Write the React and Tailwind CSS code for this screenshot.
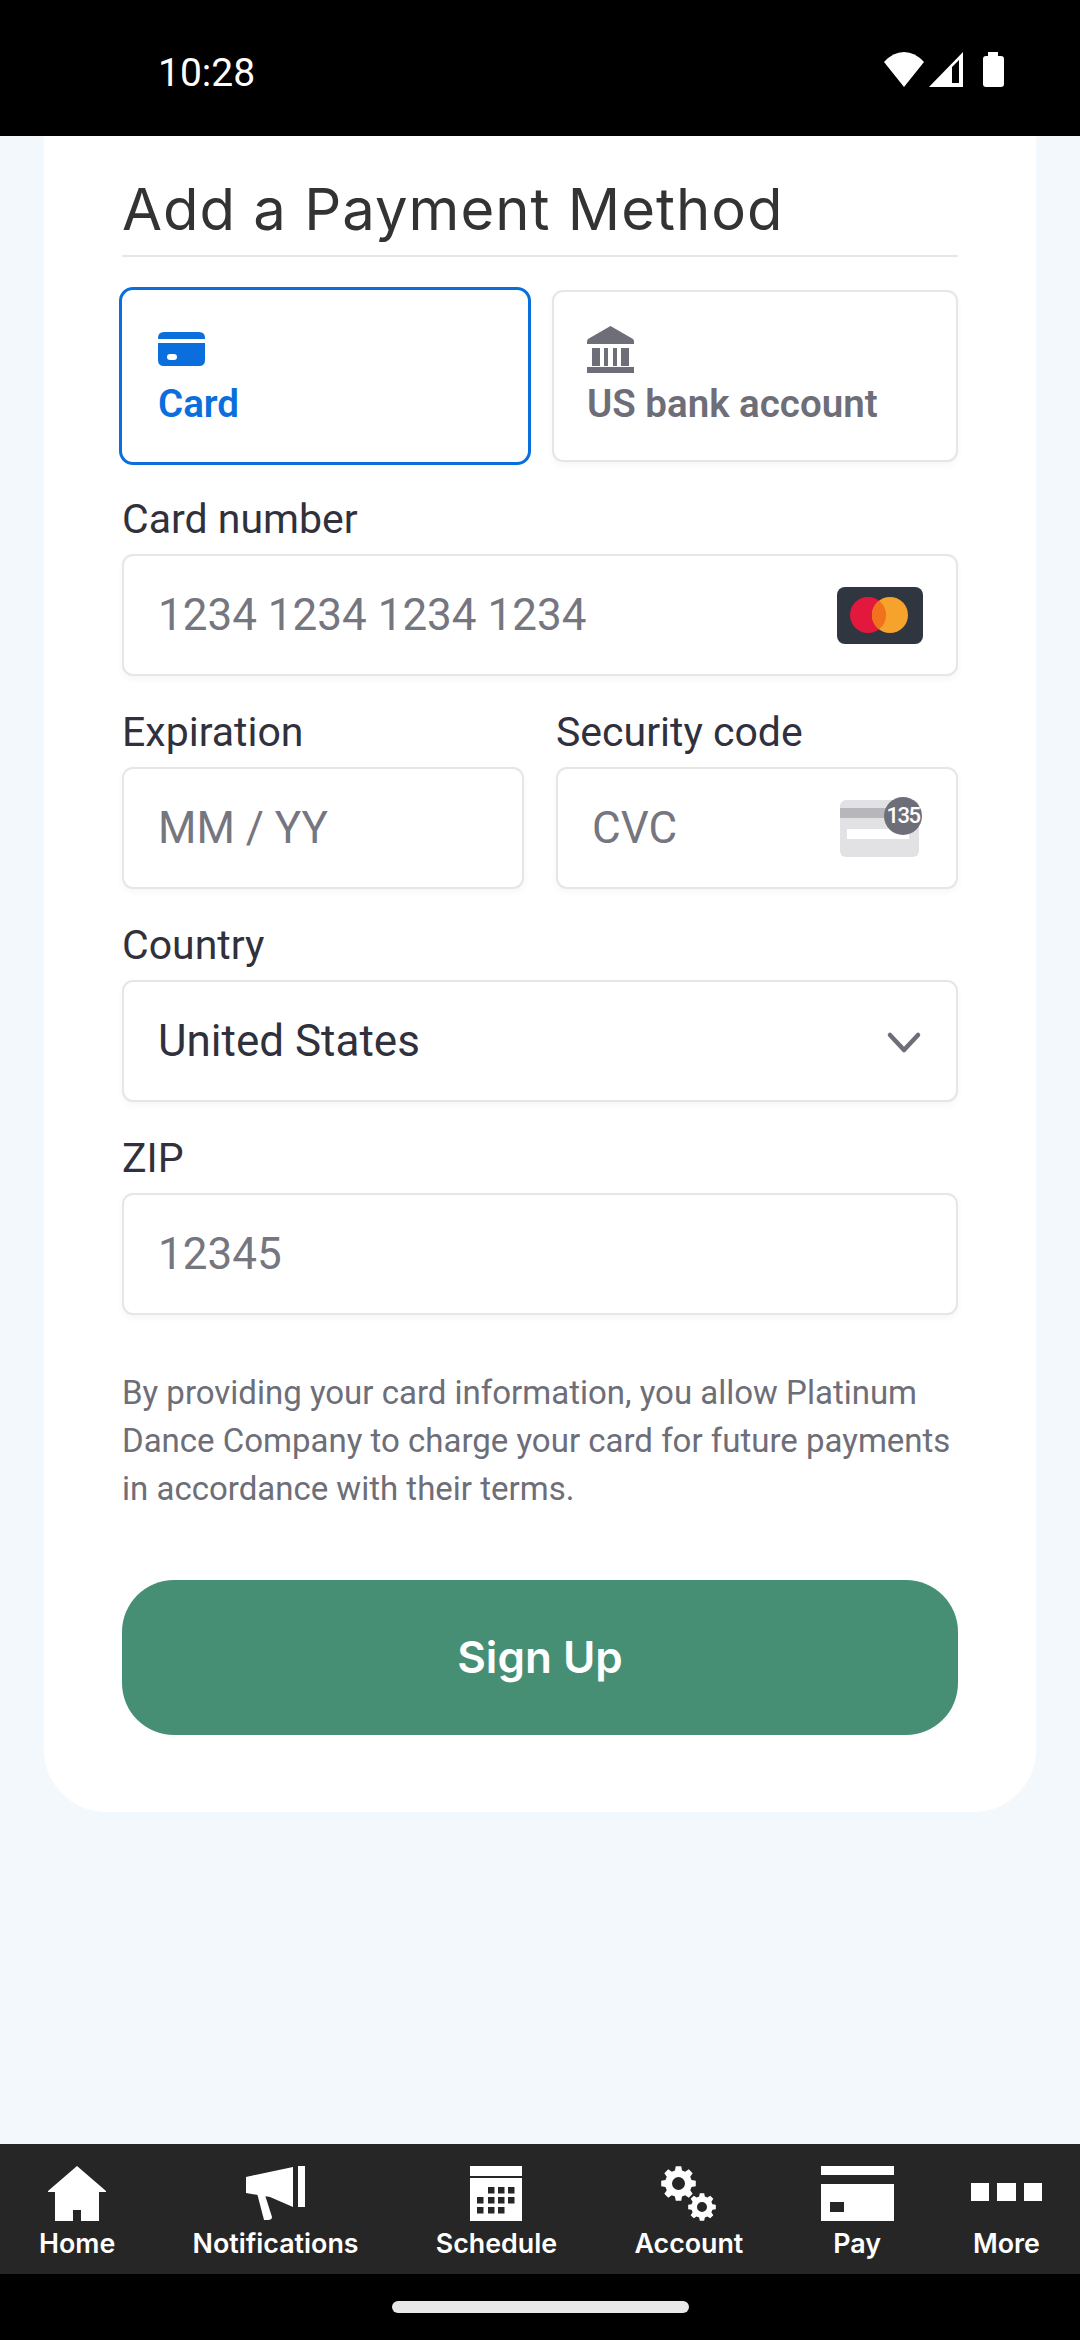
import React from "react";

const gearPath = (cx, cy, outer, inner, teeth = 8) => {
  const step = (Math.PI * 2) / teeth;
  const pts = [];
  for (let i = 0; i < teeth; i++) {
    const a = i * step - Math.PI / 2;
    [
      [inner, a - step * 0.34],
      [outer, a - step * 0.2],
      [outer, a + step * 0.2],
      [inner, a + step * 0.34],
    ].forEach(([r, t]) => pts.push(`${(cx + r * Math.cos(t)).toFixed(2)} ${(cy + r * Math.sin(t)).toFixed(2)}`));
  }
  return `M${pts.join("L")}Z`;
};

const circlePath = (cx, cy, r) => `M${cx - r} ${cy}a${r} ${r} 0 1 0 ${r * 2} 0a${r} ${r} 0 1 0 ${-r * 2} 0Z`;

function HomeIcon() {
  return (
    <svg width="58" height="55" viewBox="0 0 58 55" fill="#fff">
      <path fillRule="evenodd" d="M29 0L58 25L58 26L51 26L51 55L7 55L7 26L0 26L0 25ZM25 44L25 55L33 55L33 44Z" />
    </svg>
  );
}

function BellIcon() {
  return (
    <svg width="59" height="55" viewBox="0 0 59 55" fill="#fff">
      <path d="M0 11L47 1L47 41L24 31L0 27Z" />
      <path d="M11 27L19 29L26 51Q26 54 22 54L18 54Z" />
      <rect x="52" width="7" height="41" />
    </svg>
  );
}

function ScheduleIcon() {
  const rows = [
    [18, 28, 38],
    [7, 18, 28, 38],
    [7, 18, 28],
  ];
  return (
    <svg width="52" height="55" viewBox="0 0 52 55" fill="#fff">
      <rect width="52" height="10" />
      <rect y="12" width="52" height="43" />
      {rows.map((row, i) =>
        row.map((x) => <rect key={`${i}-${x}`} x={x} y={21 + i * 10} width="6.5" height="6.5" fill="#262626" />)
      )}
    </svg>
  );
}

function GearsIcon() {
  return (
    <svg width="55" height="55" viewBox="0 0 55 55" fill="#fff">
      <path fillRule="evenodd" d={gearPath(17.5, 17.5, 17.5, 13.5) + circlePath(17.5, 17.5, 6.5)} />
      <path fillRule="evenodd" d={gearPath(41, 41, 14, 10.8) + circlePath(41, 41, 5)} />
    </svg>
  );
}

function PayIcon() {
  return (
    <svg width="73" height="55" viewBox="0 0 73 55" fill="#fff">
      <rect width="73" height="9" />
      <path fillRule="evenodd" d="M0 18H73V55H0ZM9 36V46H23V36Z" />
    </svg>
  );
}

function MoreIcon() {
  return (
    <svg width="71" height="55" viewBox="0 0 71 55" fill="#fff">
      <rect y="17" width="18" height="18" />
      <rect x="26" y="17" width="19" height="18" />
      <rect x="53" y="17" width="18" height="18" />
    </svg>
  );
}

const NAV_ITEMS = [
  { label: "Home", Icon: HomeIcon },
  { label: "Notifications", Icon: BellIcon },
  { label: "Schedule", Icon: ScheduleIcon },
  { label: "Account", Icon: GearsIcon },
  { label: "Pay", Icon: PayIcon },
  { label: "More", Icon: MoreIcon },
];

function StatusBar() {
  return (
    <div className="flex h-[136px] shrink-0 items-center justify-between bg-black pl-[158px] pr-[76px] pt-[11px] text-white">
      <span className="font-['Roboto',sans-serif] text-[39px] leading-none">10:28</span>
      <div className="-mt-[9px] flex items-center gap-[5px]">
        <svg width="40" height="35" viewBox="0 0 40 35" fill="#fff">
          <path d="M20 35L0 10Q9 0 20 0T40 10Z" />
        </svg>
        <svg width="34" height="35" viewBox="0 0 34 35" fill="#fff">
          <path fillRule="evenodd" d="M0 35L34 0V35ZM23 15V31H30V8Z" />
        </svg>
        <svg className="ml-[15px]" width="21" height="35" viewBox="0 0 21 35" fill="#fff">
          <path d="M5 0H15V4H18Q21 4 21 7V32Q21 35 18 35H3Q0 35 0 32V7Q0 4 3 4H5Z" />
        </svg>
      </div>
    </div>
  );
}

function Label({ children }) {
  return <div className="mb-[25px] h-[20px] text-[41px] leading-[20px] text-[#30313d]">{children}</div>;
}

function Input({ children, className = "" }) {
  return (
    <div
      className={`flex h-[122px] items-center justify-between rounded-[11px] border-2 border-[#e6e6e6] bg-white pl-[34px] pr-[34px] text-[44px] text-[#757680] shadow-[0_3px_7px_rgba(0,0,0,0.04)] ${className}`}
    >
      {children}
    </div>
  );
}

function MastercardIcon() {
  return (
    <svg className="-mr-[1px]" width="86" height="57" viewBox="0 0 86 57">
      <rect width="86" height="57" rx="8" fill="#2f3640" />
      <circle cx="31" cy="28" r="18" fill="#e3183d" />
      <circle cx="53" cy="28" r="18" fill="#f5a32d" />
      <path d="M42 13.7a18 18 0 0 1 0 28.6a18 18 0 0 1 0-28.6Z" fill="#f2711c" />
    </svg>
  );
}

function CvcIcon() {
  return (
    <div className="relative mr-[3px] h-[57px] w-[79px] rounded-[6px] bg-[#e2e2e5]">
      <div className="pt-[8px]">
        <div className="h-[10px] bg-[#b6b6bb]" />
      </div>
      <div className="ml-[7px] mt-[11px] h-[10px] w-[62px] bg-white" />
      <div className="absolute -right-[3px] -top-[3px] flex h-[38px] w-[38px] items-center justify-center rounded-full bg-[#6d6e78] text-[22px] font-medium tracking-[-1.5px] text-white">
        135
      </div>
    </div>
  );
}

function PaymentTabs() {
  return (
    <div className="mt-[33px] grid grid-cols-2 gap-[24px] text-[38.5px] font-semibold leading-none">
      <div className="h-[172px] rounded-[11px] bg-white pl-[36px] pt-[42px] text-[#0a6fdc] outline-[3px] outline-[#0a6fdc] [outline-style:solid]">
        <svg className="block" width="47" height="34" viewBox="0 0 47 34" fill="#0a6fdc">
          <path d="M0 6Q0 0 6 0H41Q47 0 47 6V7H0Z" />
          <path fillRule="evenodd" d="M0 11H47V28Q47 34 41 34H6Q0 34 0 28ZM12 22a3 3 0 0 0 0 6H16a3 3 0 0 0 0-6Z" />
        </svg>
        <div className="mt-[19px]">Card</div>
      </div>
      <div className="h-[172px] rounded-[11px] border-2 border-[#e6e6e6] bg-white pl-[33px] pt-[34px] text-[#6d6e78] shadow-[0_3px_7px_rgba(0,0,0,0.04)]">
        <svg className="block" width="47" height="47" viewBox="0 0 47 47" fill="#6d6e78">
          <path d="M23.5 0L46 13Q47 14 47 16V18H0V16Q0 14 1 13Z" />
          <path d="M5 22H13V40H5ZM17 22H21V40H17ZM26 22H30V40H26ZM34 22H42V40H34Z" />
          <path d="M0 41H47V47H0Z" />
        </svg>
        <div className="mt-[12px]">US bank account</div>
      </div>
    </div>
  );
}

function PaymentCard() {
  return (
    <div className="mx-[44px] h-[1676px] rounded-b-[62px] bg-white px-[78px]">
      <h1 className="flex h-[121px] items-center border-b-2 border-[#e6e6e6] pt-[26px] font-['Inter',sans-serif] text-[58px] font-[380] leading-none tracking-[1px] text-[#333]">
        Add a Payment Method
      </h1>
      <PaymentTabs />

      <div className="mt-[47px]">
        <Label>Card number</Label>
        <Input>
          <span>1234 1234 1234 1234</span>
          <MastercardIcon />
        </Input>
      </div>

      <div className="mt-[46px] grid grid-cols-2 gap-[32px]">
        <div>
          <Label>Expiration</Label>
          <Input>MM / YY</Input>
        </div>
        <div>
          <Label>Security code</Label>
          <Input>
            <span>CVC</span>
            <CvcIcon />
          </Input>
        </div>
      </div>

      <div className="mt-[46px]">
        <Label>Country</Label>
        <Input className="!text-[#30313d]">
          <span>United States</span>
          <svg className="mt-[3px]" width="36" height="24" viewBox="0 0 36 24" fill="none" stroke="#6d6e78" strokeWidth="4.5" strokeLinecap="round" strokeLinejoin="round">
            <path d="M4 4L18 19L32 4" />
          </svg>
        </Input>
      </div>

      <div className="mt-[46px]">
        <Label>ZIP</Label>
        <Input>12345</Input>
      </div>

      <p className="mt-[54px] text-[33px] leading-[48px] text-[#6d6e78]">
        By providing your card information, you allow Platinum
        <br />
        Dance Company to charge your card for future payments
        <br />
        in accordance with their terms.
      </p>

      <button className="mt-[67px] flex h-[155px] w-full items-center justify-center rounded-[52px] bg-[#468f74] pb-[2px] font-['Inter',sans-serif] text-[44px] font-semibold text-white">
        Sign Up
      </button>
    </div>
  );
}

function BottomNav() {
  return (
    <div className="flex h-[130px] shrink-0 justify-between bg-[#262626] pl-[39px] pr-[38px] pt-[22px]">
      {NAV_ITEMS.map(({ label, Icon }) => (
        <div key={label} className="flex flex-col items-center">
          <Icon />
          <span className="mt-[7px] font-['Inter',sans-serif] text-[26.8px] font-semibold leading-[30px] text-white">{label}</span>
        </div>
      ))}
    </div>
  );
}

export default function App() {
  return (
    <div className="flex h-[2340px] w-[1080px] flex-col overflow-hidden bg-[#f3f8fc] font-['Roboto',sans-serif]">
      <StatusBar />
      <main className="flex-1">
        <PaymentCard />
      </main>
      <BottomNav />
      <div className="flex h-[66px] shrink-0 justify-center bg-black pt-[27px]">
        <div className="h-[12px] w-[297px] rounded-full bg-[#e8e8e8]" />
      </div>
    </div>
  );
}
